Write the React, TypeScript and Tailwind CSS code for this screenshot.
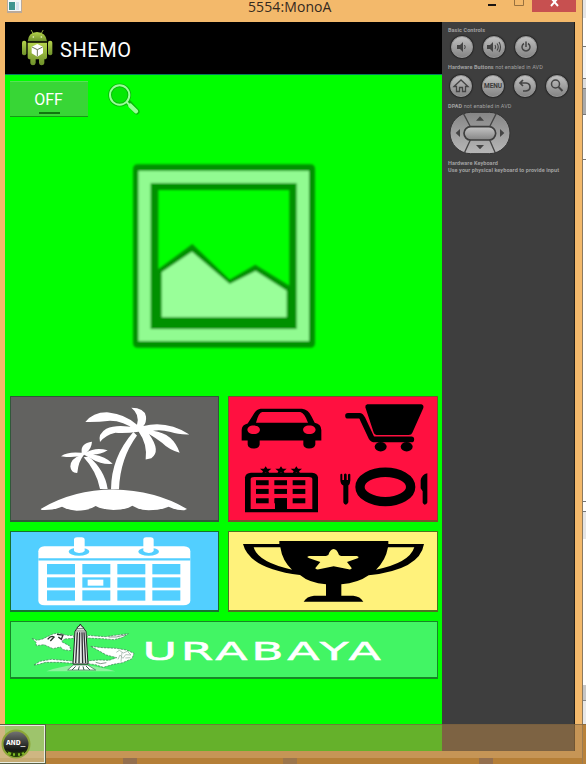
import type { ReactNode } from "react";

const FONT = "font-['Roboto','Liberation_Sans',sans-serif]";

function TitleBar() {
  return (
    <header className="flex h-[22px] items-start justify-between pl-[7px]">
      <svg width="16" height="13" viewBox="0 0 16 13">
        <rect x="0" y="-2" width="15" height="15" fill="#b9a99a" />
        <rect x="1" y="0" width="13" height="11" fill="#f4f6f7" />
        <rect x="2" y="2" width="6" height="8" fill="#3f9490" />
        <rect x="9" y="2" width="3" height="8" fill="#d7e3ef" />
      </svg>
      <div className="ml-[225px] w-24 whitespace-nowrap font-['Open_Sans','Noto_Sans',sans-serif] text-[14px] leading-[14px] tracking-[0.1px] text-[#33291e]">
        5554:MonoA
      </div>
      <div className="flex flex-1 justify-end">
        <svg width="100" height="13" viewBox="0 0 100 13">
          <rect x="12" y="4" width="8" height="2" fill="#1a1512" />
          <path d="M38.500 -3V5.500H47.500V-3" fill="none" stroke="#98713f" />
          <rect x="56" y="0" width="44" height="12" fill="#c75050" />
          <path d="M75 -2L82 6M82 -2L75 6" stroke="#fff" strokeWidth="1.900" />
        </svg>
      </div>
      <div className="w-[6px]" />
    </header>
  );
}

function AndroidIcon() {
  return (
    <svg width="32" height="38" viewBox="64 92 96 114">
      <defs>
        <linearGradient id="droid" x1="0" y1="0" x2="0" y2="1">
          <stop offset="0" stopColor="#b5d44c" />
          <stop offset="1" stopColor="#6d902a" />
        </linearGradient>
      </defs>
      <path d="M95 96L101 107M130 96L124 107" stroke="#8ea93f" strokeWidth="3" strokeLinecap="round" />
      <path d="M84 129Q86 102 112 101Q139 102 142 129Z" fill="url(#droid)" />
      <rect x="67" y="127" width="13" height="44" rx="6" fill="url(#droid)" />
      <rect x="145" y="127" width="13" height="44" rx="6" fill="url(#droid)" />
      <path d="M84 133H142V176Q142 183 134 183V195Q133 201 126 201Q119 201 118 194V183H108V194Q107 201 100 201Q93 201 92 195V183Q84 183 84 176Z" fill="url(#droid)" />
      <circle cx="101" cy="116" r="2.500" fill="#eef5cf" />
      <circle cx="125" cy="116" r="2.500" fill="#eef5cf" />
      <path d="M113 137L130 145V165L113 175L96 165V145Z" fill="#fff" />
      <path d="M97 146L113 154L129 146M113 154V174" fill="none" stroke="#6c7657" strokeWidth="3" />
    </svg>
  );
}

function ToggleRow() {
  return (
    <div className="flex h-[42px] items-start pl-[5px] pt-[6px]">
      <button className="flex h-[36px] w-[78px] flex-col items-center border-b border-t border-b-[#159c16] border-t-[#55e455] bg-[#38d636] pt-[8px] text-[16px] leading-[20px] text-white">
        <span className="mr-[1px]">OFF</span>
        <span className="mt-[2px] h-[2px] w-[21px] shrink-0 bg-[#11770f]" />
      </button>
      <svg className="ml-[20px] mt-[1px]" width="32" height="34" viewBox="324 246 96 102">
        <path d="M383 305L410 335" stroke="#0ab80a" strokeWidth="17" strokeLinecap="round" />
        <circle cx="359" cy="285" r="29" fill="#04e904" stroke="#0ab80a" strokeWidth="11" />
        <circle cx="359" cy="285" r="29" fill="none" stroke="#99ff99" strokeWidth="6" />
        <path d="M379 305L392 319" stroke="#99ff99" strokeWidth="6" />
        <path d="M391 317L408 334" stroke="#99ff99" strokeWidth="13" strokeLinecap="round" />
      </svg>
    </div>
  );
}

function Placeholder() {
  return (
    <svg className="ml-[125px] mt-[44px] shrink-0" width="190" height="190" viewBox="30 18 570 570">
      <defs>
        <filter id="soft" x="-5%" y="-5%" width="110%" height="110%">
          <feGaussianBlur stdDeviation="3.500" />
        </filter>
      </defs>
      <g filter="url(#soft)">
        <path fillRule="evenodd" fill="#009100" d="M54 28H571Q585 28 585 43V563Q585 578 571 578H54Q39 578 39 563V43Q39 28 54 28ZM115 105V343L217 267L329 374L406 329L508 392V105Z" />
        <path fillRule="evenodd" fill="#91fb91" d="M55 47H567V559H55ZM92 85V522H530V85Z" />
        <path d="M125 352L216 290L329 387L407 348L500 407V487H125Z" fill="#99ff99" />
      </g>
    </svg>
  );
}

function Palms() {
  return (
    <svg className="size-full" viewBox="33 36 621 368" preserveAspectRatio="none" fill="#fff">
      <path d="M122 371Q220 313 340 313Q465 315 561 371L553 375Q530 376 506 364Q482 375 446 375Q420 375 397 361Q376 374 340 374Q307 373 287 362Q267 376 230 376Q205 375 186 364Q160 376 125 374Z" />
      <path d="M333 312Q334 216 400 141L411 151Q360 220 357 312Z" />
      <path d="M300 311Q290 258 251 216L266 214Q314 254 323 311Z" />
      <path d="M408 136Q370 107 330 107Q292 112 256 111Q280 80 326 82Q376 87 411 119Q420 88 394 68Q433 68 438 94Q440 112 430 123Q500 105 568 148Q535 149 512 141Q482 132 459 137Q520 145 539 203Q507 194 486 173Q464 157 447 147Q484 199 454 219L437 223Q443 177 416 140Q378 145 346 143Q314 151 300 171Q293 146 319 131Q351 116 408 128Z" />
      <path d="M244 209Q225 220 183 213Q205 198 245 203Q241 174 276 170Q274 193 259 202Q285 185 323 195Q301 208 279 208Q317 213 338 236Q304 239 277 222Q260 213 252 209Q235 229 232 263Q213 264 211 244Q211 221 244 209Z" />
    </svg>
  );
}

function Star({ x, y }: { x: number; y: number }) {
  return (
    <path
      transform={`translate(${x} ${y})`}
      d="M0 -12L5 -4H17L8 3L12 12L0 7L-12 12L-8 3L-17 -4H-5Z"
    />
  );
}

function Services() {
  const rows = [285, 311, 339];
  const cols = [108, 163, 218];
  return (
    <svg className="size-full" viewBox="27 36 624 368" preserveAspectRatio="none">
      <path fillRule="evenodd" d="M122 71H246Q265 72 275 95L284 113Q304 117 304 135V166H286V178Q284 190 267 190Q251 189 250 178V166H119V178Q117 190 100 190Q84 189 83 178V166H65V135Q65 119 83 115L98 92Q108 72 122 71ZM127 81Q116 82 108 113H264Q253 83 241 81ZM101 121C76 121 76 147 101 147C126 147 126 121 101 121ZM268 121C243 121 243 147 268 147C293 147 293 121 268 121Z" />
      <path d="M442 58H604Q612 60 610 69L577 143Q575 150 566 150H474Q464 150 461 142L436 67Q435 60 442 58Z" />
      <path d="M384 92H418Q424 92 428 102L454 157Q457 163 466 163H574" fill="none" stroke="#000" strokeWidth="17" strokeLinecap="round" strokeLinejoin="round" />
      <ellipse cx="482" cy="185" rx="18" ry="14" />
      <ellipse cx="560" cy="185" rx="18" ry="14" />
      <Star x={137} y={255} />
      <Star x={183} y={255} />
      <Star x={229} y={255} />
      <path d="M75 381V277Q77 264 93 263H276Q293 265 294 277V381Z" />
      <path d="M92 371V281Q92 275 103 275H266Q277 275 277 281V371Z" fill="#ff1040" />
      {rows.map((y) => cols.map((x) => <rect key={`${x}-${y}`} x={x} y={y} width="38" height="15" />))}
      <rect x="165" y="339" width="36" height="39" />
      <ellipse cx="496" cy="305" rx="76" ry="44" fill="none" stroke="#000" strokeWidth="28" />
      <path d="M361 268Q365 263 367 268V284H372V268Q376 262 380 268V284H384V268Q389 263 391 268V286Q390 298 385 301V351Q382 358 377 358Q371 357 370 351V301Q361 296 361 284Z" />
      <path d="M622 264V352Q620 358 614 358Q609 357 608 352V318L602 309V285Q606 267 622 264Z" />
    </svg>
  );
}

function Calendar() {
  return (
    <svg className="size-full" viewBox="33 20 621 234" preserveAspectRatio="none">
      <path d="M133 63H552Q571 64 571 78V226Q570 239 550 240H134Q115 238 115 226V78Q116 64 133 63Z" fill="#fff" />
      <path d="M115 102H571" stroke="#52cfff" strokeWidth="7" />
      <g fill="#52cfff">
        <ellipse cx="237" cy="79" rx="31" ry="12" />
        <ellipse cx="446" cy="79" rx="31" ry="12" />
        {[116, 156, 195].map((y) =>
          [141, 247, 352, 457].map((x) => <rect key={`${x}-${y}`} x={x} y={y} width="84" height="31" />),
        )}
      </g>
      <rect x="263" y="163" width="47" height="18" fill="#fff" />
      <path d="M222 41Q223 36 231 36H245Q254 37 254 43V77Q249 83 237 83Q225 82 222 77ZM430 41Q431 36 438 36H452Q461 37 461 43V77Q457 83 446 83Q434 82 430 77Z" fill="#fff" />
    </svg>
  );
}

function Trophy() {
  return (
    <svg className="size-full" viewBox="27 20 624 234" preserveAspectRatio="none">
      <path fillRule="evenodd" d="M178 47H505V56H612Q600 133 446 150Q414 173 364 177V211H400Q421 213 430 229H251Q260 213 282 211H318V177Q268 173 240 149Q88 130 69 56H178ZM101 66Q114 111 216 133Q187 107 181 66ZM504 66Q497 106 468 133Q568 113 583 66Z" />
      <path d="M341 71Q351 71 357 89L363 92H410Q420 94 413 99L381 110L395 128Q396 133 386 132L341 123L297 132Q285 133 286 128L301 110L268 99Q256 94 268 92H318L325 89Q330 72 341 71Z" fill="#fff27b" />
    </svg>
  );
}

function CityBanner() {
  return (
    <svg className="size-full" viewBox="11 622 426 55" preserveAspectRatio="none">
      <g transform="translate(0 612) scale(.33333)">
        <g fill="#fff" stroke="#3a7652" strokeWidth="2" strokeDasharray="7 3">
          <path d="M96 79L111 85L128 81L148 71Q166 61 186 65Q200 72 220 70L222 79L193 81L185 89L209 102L213 116L190 113L181 105L159 110L132 98L109 101L108 91Z" />
          <path d="M263 70L286 72L317 74L344 70L385 65L368 76L342 83L308 80L280 79L261 78Z" />
          <path d="M102 159L120 148L154 142L218 147L220 154L176 151L137 151L116 157Z" />
          <path d="M272 103L307 107L348 109L379 114L402 124L396 140L368 152L340 157L310 166L286 158L263 155L266 146L298 144L327 145L350 137L319 129L294 115Z" />
        </g>
        <path d="M143 82Q153 69 162 75L151 87M171 67L189 69L184 82L175 75" fill="none" stroke="#27352c" strokeWidth="4" />
        <path d="M349 121L358 115L370 123L382 118L393 129L377 128L369 139L360 129L354 142M366 121L363 149M376 138L391 137" fill="none" stroke="#8da497" strokeWidth="2" />
        <path d="M326 75L349 75L378 68M287 151L302 155L319 152" fill="none" stroke="#4b6756" strokeWidth="2" />
        <path d="M139 178Q178 164 220 160H263Q310 168 346 178Z" fill="#8df29e" />
        <path d="M203 174L220 159H263L287 174Z" fill="#fff" stroke="#34634a" strokeWidth="2" />
        <path d="M227 163L216 174M238 163L235 174M249 163L252 174M258 162L270 174" stroke="#34634a" strokeWidth="3" />
        <path d="M225 58L231 49Q232 43 238 42L241 36L245 43Q250 44 252 50L258 58L264 156H219Z" fill="#e9eeea" stroke="#222" strokeWidth="3" />
        <path d="M232 61L227 153M239 61L237 154M246 61L248 154M252 61L257 153" stroke="#302c35" strokeWidth="4" />
        <path d="M226 57H257M231 50H252" stroke="#333" strokeWidth="2" />
      </g>
      <text
        x="142.500"
        y="660"
        fill="#fff"
        stroke="#fff"
        strokeWidth=".5"
        fontFamily="'DejaVu Sans', sans-serif"
        fontSize="25.500"
        textLength="242"
        lengthAdjust="spacingAndGlyphs"
        letterSpacing="2"
      >
        URABAYA
      </text>
    </svg>
  );
}

function Tile({ className, children }: { className: string; children: ReactNode }) {
  return <button className={`block border border-b-2 p-0 ${className}`}>{children}</button>;
}

function Phone() {
  return (
    <main className="flex w-[437px] shrink-0 flex-col bg-[#00ff00]">
      <div className="flex h-[53px] shrink-0 items-center border-b border-[#087b61] bg-black pl-[16px] text-white">
        <AndroidIcon />
        <h1 className="ml-[7px] mt-[3px] text-[20px] leading-[24px] tracking-[0.6px]">SHEMO</h1>
      </div>
      <ToggleRow />
      <Placeholder />
      <div className="ml-[5px] mt-[45px] grid w-[428px] grid-cols-[209px_210px] gap-x-[9px] gap-y-[9px]">
        <Tile className="h-[126px] border-[#31573a] bg-[#626260]"><Palms /></Tile>
        <Tile className="h-[126px] border-[#79512f] bg-[#ff1040]"><Services /></Tile>
        <Tile className="h-[81px] border-[#16722f] bg-[#52cfff]"><Calendar /></Tile>
        <Tile className="h-[81px] border-[#4d7222] bg-[#fff27b]"><Trophy /></Tile>
        <Tile className="col-span-2 h-[58px] border-[#168727] bg-[#42f564]"><CityBanner /></Tile>
      </div>
    </main>
  );
}

function RoundButton({ children }: { children: ReactNode }) {
  return (
    <button className="flex size-[22px] items-center justify-center rounded-full border border-[#979797] bg-linear-to-b from-[#c0c0c0] to-[#858585] shadow-[0_0_1px_1px_#292929]">
      {children}
    </button>
  );
}

function Glyph({ children }: { children: ReactNode }) {
  return (
    <svg width="20" height="20" viewBox="0 0 20 20" fill="none" stroke="#444" strokeWidth="1.500" className="shrink-0">
      {children}
    </svg>
  );
}

function DPad() {
  return (
    <svg width="62" height="44" viewBox="57 333 186 132" className="ml-[-2px] shrink-0">
      <defs>
        <linearGradient id="pad" x1="0" y1="0" x2="0" y2="1">
          <stop offset="0" stopColor="#858585" />
          <stop offset="1" stopColor="#b7b7b7" />
        </linearGradient>
        <linearGradient id="key" x1="0" y1="0" x2="0" y2="1">
          <stop offset="0" stopColor="#c5c5c5" />
          <stop offset="1" stopColor="#858585" />
        </linearGradient>
      </defs>
      <rect x="60" y="337" width="180" height="124" rx="62" fill="url(#pad)" stroke="#333" strokeWidth="3" />
      <path d="M100 340L120 378M199 340L180 378M103 459L121 420M196 459L179 420" stroke="#454545" strokeWidth="4" />
      <rect x="102" y="380" width="95" height="40" rx="20" fill="url(#key)" stroke="#3e3e3e" strokeWidth="5" />
      <path d="M138 362L150 349L162 362ZM138 435L150 448L162 435ZM90 387L77 399L90 411ZM210 387L223 399L210 411Z" fill="#444" />
    </svg>
  );
}

function Sidebar() {
  return (
    <aside className="flex flex-1 flex-col border-r border-[#201c18] bg-[#3e3e3e] pl-[6px] text-[5.500px] leading-[7px] tracking-[0.08px] text-[#a0a0a0]">
      <p className="mt-[5px] font-bold">Basic Controls</p>
      <div className="ml-[3px] mt-[2px] flex gap-[10px]">
        <RoundButton>
          <Glyph><path d="M5 8H8L11 5V15L8 12H5Z" fill="#444" stroke="none" /><path d="M12.500 8Q14 10 12.500 12" strokeWidth="1" /></Glyph>
        </RoundButton>
        <RoundButton>
          <Glyph><path d="M3 8H6L9 5V15L6 12H3Z" fill="#444" stroke="none" /><path d="M11 8Q12.500 10 11 12M13 6.500Q15.500 10 13 13.500M15 5Q18 10 15 15" strokeWidth="1.100" /></Glyph>
        </RoundButton>
        <RoundButton>
          <Glyph><path d="M8 6.500A4 4 0 1 0 12 6.500M10 4.500V10" /></Glyph>
        </RoundButton>
      </div>
      <p className="mt-[6px] whitespace-nowrap"><b>Hardware Buttons</b> not enabled in AVD</p>
      <div className="ml-[2px] mt-[4px] flex gap-[10px]">
        <RoundButton>
          <Glyph><path d="M3 10.500L10 4L17 10.500H14.500V15.500H11.500V11.500H8.500V15.500H5.500V10.500Z" strokeWidth="1.300" /></Glyph>
        </RoundButton>
        <RoundButton><span className="text-[6.500px] font-bold tracking-[-0.100px] text-[#3c3c3c]">MENU</span></RoundButton>
        <RoundButton>
          <Glyph><path d="M8 4L5 7L8 10M5.500 7H11Q15 7.500 15 11Q15 14.500 11 15H8" strokeWidth="1.700" /></Glyph>
        </RoundButton>
        <RoundButton>
          <Glyph><circle cx="8.500" cy="8" r="4" /><path d="M11.500 11L15.500 15" strokeWidth="2" /></Glyph>
        </RoundButton>
      </div>
      <p className="mt-[6px]"><b>DPAD</b> not enabled in AVD</p>
      <div className="mt-[1px] pl-[3px]"><DPad /></div>
      <p className="mt-[5px] whitespace-nowrap font-bold leading-[6.500px]">
        Hardware Keyboard
        <br />
        Use your physical keyboard to provide input
      </p>
    </aside>
  );
}

function BackgroundWindow() {
  return (
    <div className="flex flex-1 flex-col border-l border-[#8c795f] bg-white">
      <div className="h-[18px] bg-[#e6e6e6]" />
      <div className="h-[29px] border-b border-[#777] bg-white" />
      <div className="h-[32px] border-b border-[#777] bg-[#f3f5f7]" />
      <div className="h-[9px] bg-[#ddd]" />
      <div className="h-[27px] border-y border-[#777] bg-[#aaa]" />
      <div className="h-[45px] border-b border-[#777]" />
      <div className="h-[342px] border-b border-[#777]" />
      <div className="h-[10px] border-b border-[#777]" />
      <div className="h-[27px] bg-[#e6e6e6]" />
      <div className="h-[146px]" />
      <div className="h-[16px] border-b border-[#888] bg-[#c6c6c6]" />
      <div className="h-[23px] bg-[#e8e8e8]" />
      <div className="flex-1 bg-[#d28a27]" />
    </div>
  );
}

function Taskbar() {
  return (
    <footer className="absolute inset-x-0 bottom-0 h-[40px] border-t border-[#735d3d]/60 bg-[#a87d48]/60">
      <div className="flex h-[38px] w-[45px] items-center border border-l-0 border-[#e9eee2] bg-[#d8d7ad]/50 outline outline-1 outline-[#596044]">
        <svg width="32" height="32" viewBox="0 0 32 32">
          <defs>
            <linearGradient id="ball" x1="0" y1="0" x2="0" y2="1">
              <stop offset="0" stopColor="#777" />
              <stop offset=".7" stopColor="#161916" />
              <stop offset="1" stopColor="#162b05" />
            </linearGradient>
          </defs>
          <circle cx="16" cy="16" r="13.500" fill="url(#ball)" stroke="#8ca637" strokeWidth="2" />
          <path d="M6 22Q16 27 26 22L23 27Q16 31 9 27Z" fill="#243c08" />
          <path d="M8 25L11 26M13 26.500H15M18 26.500H20M22 26L24 25" stroke="#7dbb24" strokeWidth="2.500" />
          <text x="6" y="17" fill="#fff" fontFamily="'DejaVu Sans Mono', monospace" fontWeight="bold" fontSize="7" textLength="19.500" lengthAdjust="spacingAndGlyphs">AND_</text>
        </svg>
      </div>
    </footer>
  );
}

export default function App() {
  return (
    <div className={`relative flex h-[764px] w-[586px] overflow-hidden ${FONT}`}>
      <div className="flex w-[582px] shrink-0 flex-col bg-[#f3b96b]">
        <TitleBar />
        <div className="ml-[5px] flex h-[729px] w-[570px]">
          <Phone />
          <Sidebar />
        </div>
        <div className="mt-[7px] flex h-[6px] bg-[#c88222]">
          <div className="ml-[123px] h-full w-[14px] bg-[#765b59]" />
          <div className="ml-[146px] h-full w-[14px] bg-[#8b6951]" />
          <div className="ml-[182px] h-full w-[14px] bg-[#765b59]" />
        </div>
      </div>
      <BackgroundWindow />
      <Taskbar />
    </div>
  );
}
